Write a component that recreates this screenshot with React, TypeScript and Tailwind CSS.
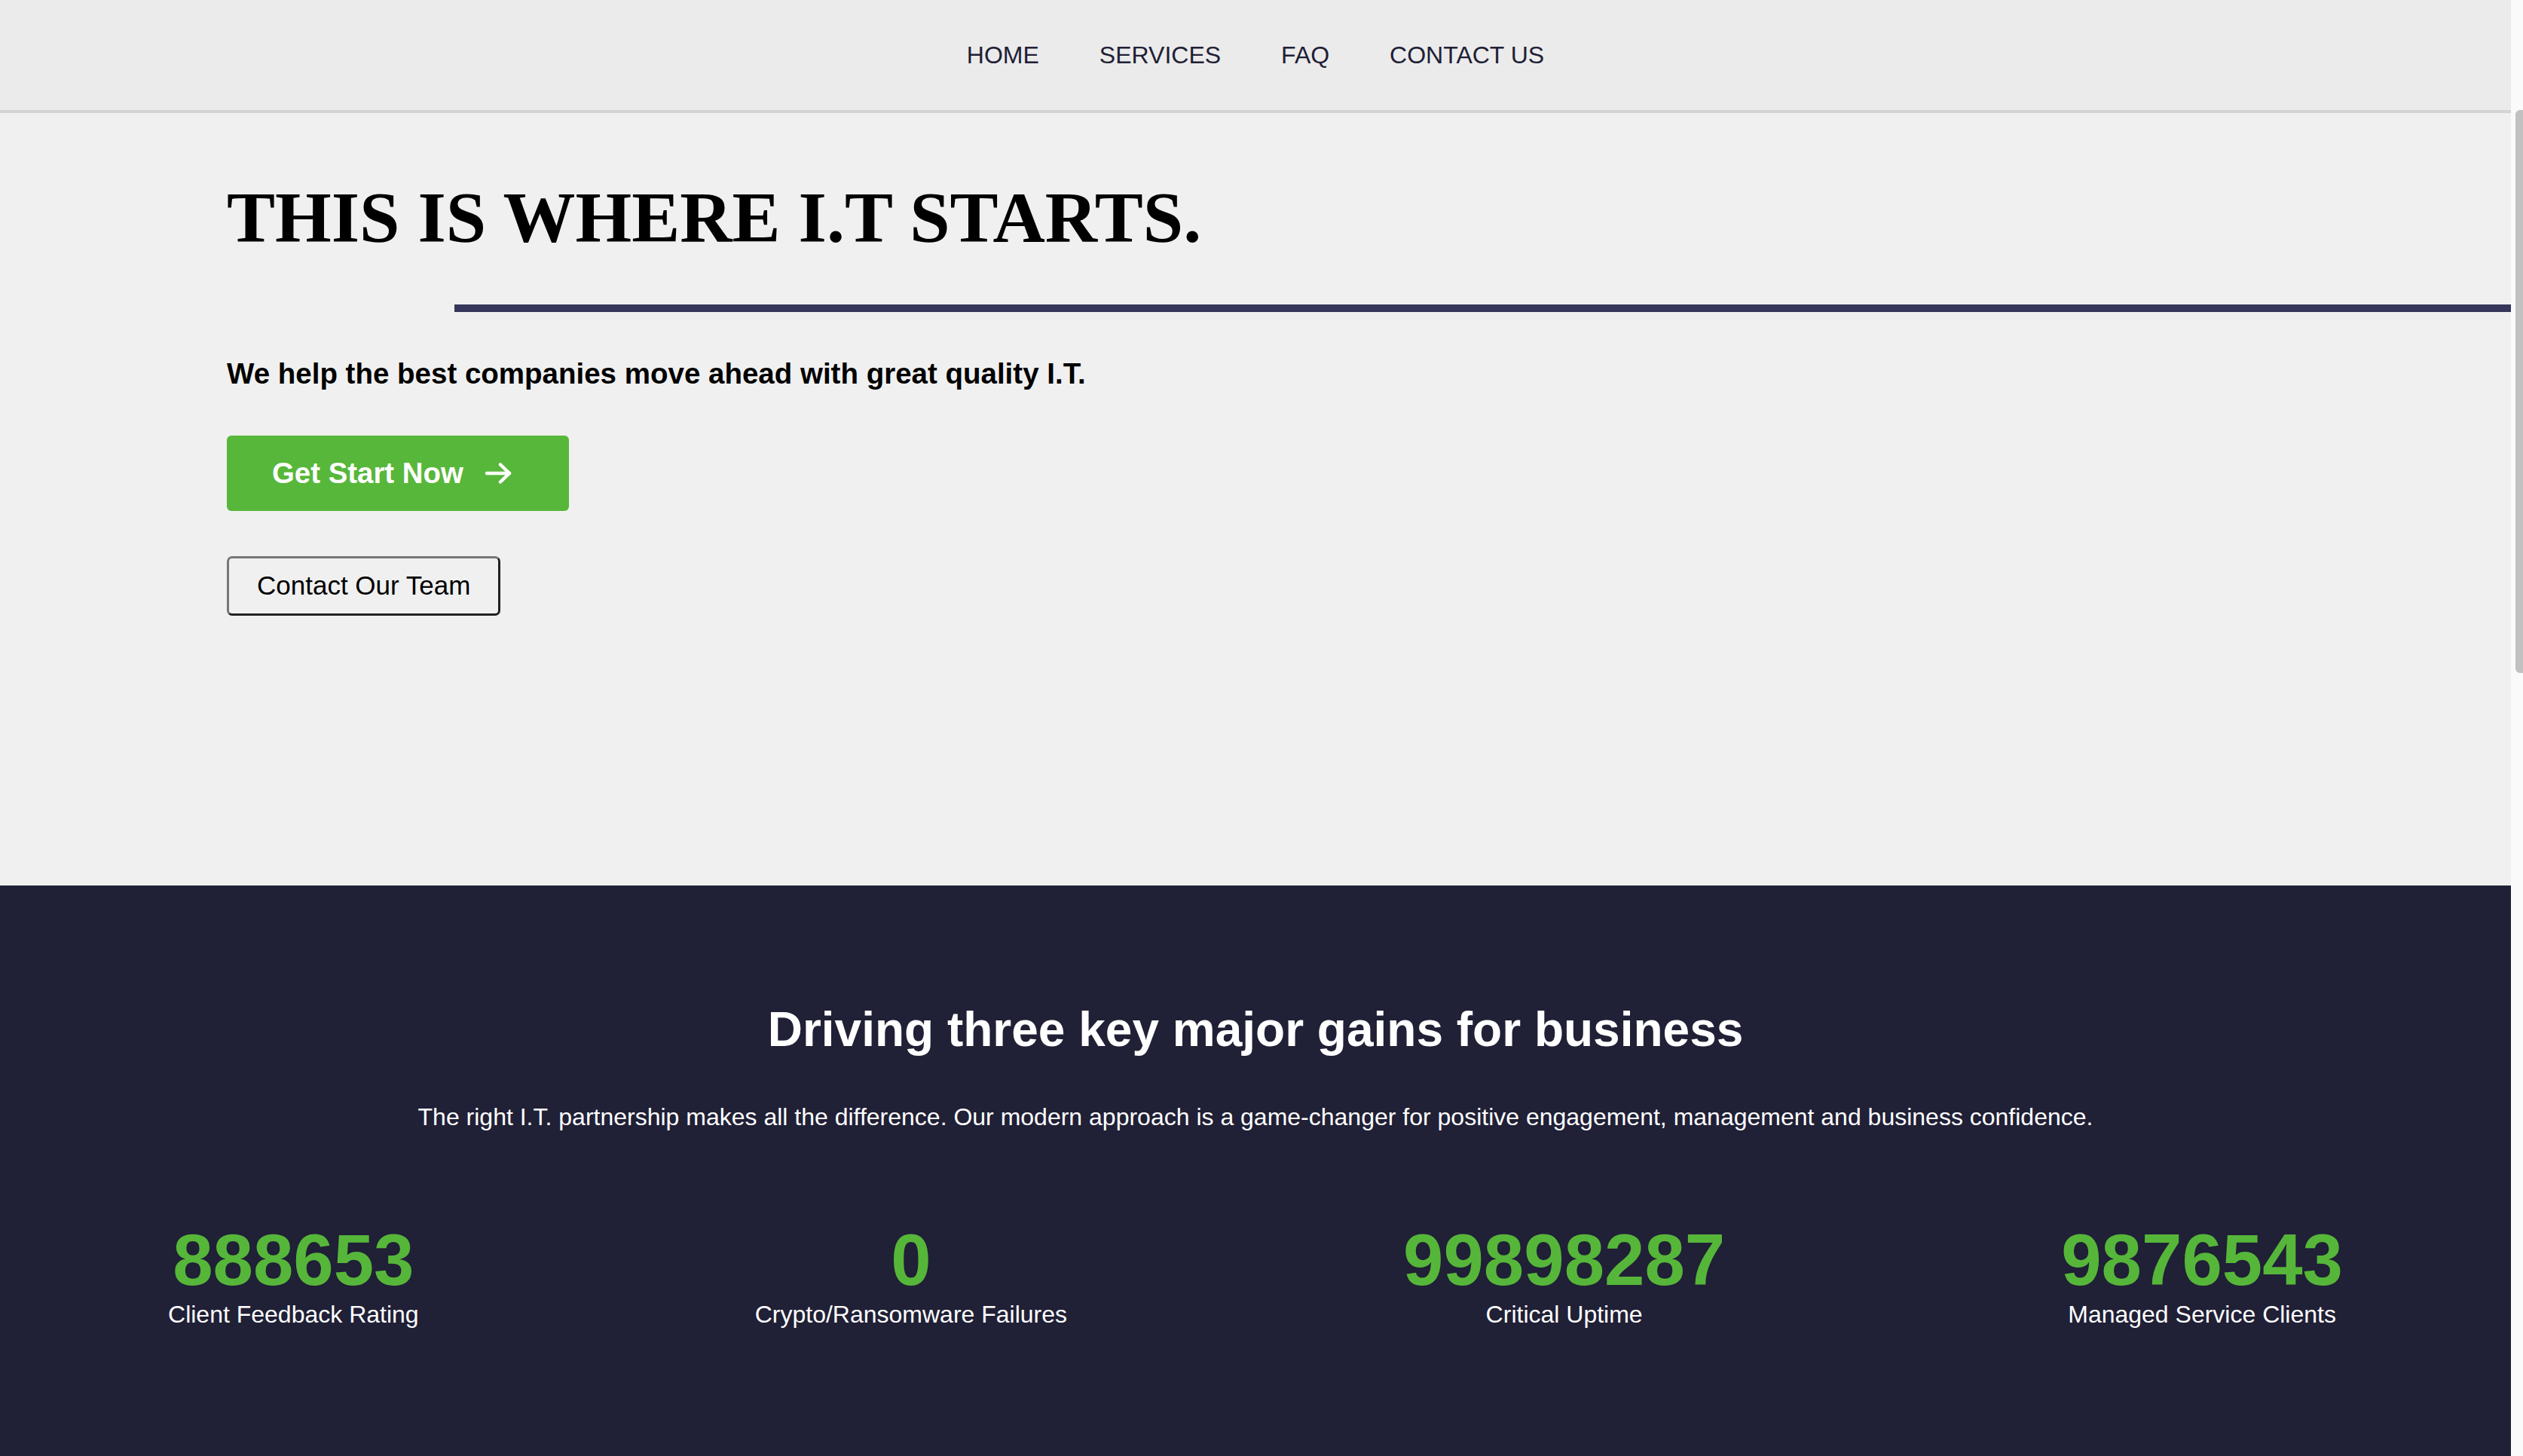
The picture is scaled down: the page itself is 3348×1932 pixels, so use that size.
import React from "react";

const stats = [
  { value: "888653", label: "Client Feedback Rating" },
  { value: "0", label: "Crypto/Ransomware Failures" },
  { value: "99898287", label: "Critical Uptime" },
  { value: "9876543", label: "Managed Service Clients" },
];

const links = ["HOME", "SERVICES", "FAQ", "CONTACT US"];

export default function App() {
  return (
    <div className="flex h-screen overflow-hidden bg-[#f0f0f0] font-['Liberation_Sans',Arial,sans-serif]">
      <main className="min-w-0 flex-1 overflow-hidden">
        <nav className="flex h-[150px] items-center justify-center border-b-4 border-[#d4d4d4] bg-[#ebebeb]">
          {links.map((l) => (
            <a key={l} href="#" className="px-[40px] text-[32px] text-[#202036]">
              {l}
            </a>
          ))}
        </nav>

        <section className="flex h-[1025px] flex-col items-start bg-[#f0f0f0] pl-[301px] pt-[91px]">
          <h1 className="font-['Liberation_Serif','Times_New_Roman',serif] text-[96px] font-bold leading-none text-black">
            THIS IS WHERE I.T STARTS.
          </h1>
          <div className="ml-[302px] mt-[67px] h-[10px] self-stretch bg-[#35365a]" />
          <p className="mt-[59px] text-[38.5px] font-bold leading-[46px] text-black">
            We help the best companies move ahead with great quality I.T.
          </p>
          <button className="mt-[59px] flex h-[100px] items-center gap-[28px] rounded-[6px] bg-[#57b73a] pl-[60px] pr-[76px] text-[38.4px] font-bold text-white">
            <span>Get Start Now</span>
            <svg width="36" height="30" viewBox="0 0 36 30" fill="none" stroke="currentColor" strokeWidth="4.5" strokeLinecap="round" strokeLinejoin="round">
              <path d="M3 15H33" />
              <path d="M21 3.5L33 15L21 26.5" />
            </svg>
          </button>
          <button className="mt-[60px] flex h-[79px] items-center rounded-[7px] border-[3px] border-b-[#222222] border-l-[#777777] border-r-[#222222] border-t-[#777777] bg-[#f0f0f0] px-[37px] text-[35px] text-black">
            Contact Our Team
          </button>
        </section>

        <section className="h-[3825px] bg-[#202036] pt-[153px] text-white">
          <h2 className="text-center text-[64px] font-bold leading-[77px]">
            Driving three key major gains for business
          </h2>
          <p className="mt-[53px] text-center text-[32px] leading-[48px]">
            The right I.T. partnership makes all the difference. Our modern approach is a game-changer for positive engagement, management and business confidence.
          </p>
          <div className="mt-[118px] flex justify-around">
            {stats.map((s) => (
              <div key={s.label} className="flex flex-col items-center">
                <span className="text-[96px] font-bold leading-none text-[#56b63a]">{s.value}</span>
                <span className="text-[32px] leading-[48px] text-white">{s.label}</span>
              </div>
            ))}
          </div>
        </section>
      </main>

      <aside className="flex w-[16px] shrink-0 flex-col items-end bg-[#fafafa] pt-[146px]">
        <div className="h-[747px] w-[10px] rounded-l-[6px] bg-[#c1c1c1]" />
      </aside>
    </div>
  );
}
